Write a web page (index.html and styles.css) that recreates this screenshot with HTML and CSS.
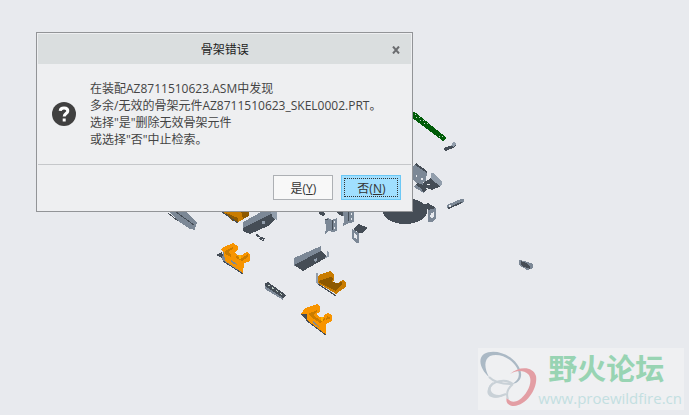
FILE: index.html
```html
<!DOCTYPE html>
<html lang="zh-CN">
<head>
    <meta charset="UTF-8">
    <title>骨架错误</title>
    <link rel="stylesheet" href="styles.css">
</head>
<body>
    <!-- 模型视图 -->
    <svg class="scene" width="689" height="415" viewBox="0 0 689 415" shape-rendering="crispEdges" aria-hidden="true">
        <!-- 绿色导轨 -->
        <path class="green" d="M411 110l5 3 31 25-4 3-32-24z"/>
        <path class="holes" d="M412 114l30 24M415 114l30 24"/>
        <path class="dark" d="M444 148l8-3 4 0-1 2-9 4-2-1z"/>
        <path class="light" d="M453 142l1-1 2 3-2 3-3-1z"/>

        <!-- 右侧支架 -->
        <path class="steel" d="M413 167l3-4 11 8-1 10-4 2 5 4-3 6-10-6 3-4-4-3z"/>
        <path class="dark" d="M416 163l11 8v2l-12-8zM417 183l4 1 6 5-3 4-3-5-5-3z"/>
        <path class="dark" d="M423 183l8-5 10 8-9 4-9-3z"/>
        <path class="light" d="M431 173l2 0 9 8v4l-2 1-9-7z"/>
        <path class="hole" d="M416 175h1v2h-1zM421 178h2v2h-2zM427 184h3v1h-3z"/>
        <path class="steel" d="M447 205l14-6h3v2l-2 2-13 6-2-1z"/>
        <path class="dark" d="M447 208l14-6 1 1-13 6z"/>
        <path class="hole" d="M449 205h2v2h-2z"/>

        <!-- 圆盘 -->
        <ellipse class="dark" cx="405" cy="211" rx="22" ry="13"/>
        <path class="dark" d="M423 205l5-2 8 5-6 3z"/>
        <path class="steel" d="M428 210l8-2v10l-3 4h-5z"/>
        <path class="hole" d="M431 213l3-1v4l-2 2-2-1z"/>

        <!-- 左侧板件 -->
        <path class="steel" d="M168 211h17l6 6 6 6-1 2-1 5-5-1-12-8z"/>
        <path class="edge" d="M176 212l18 13M168 213l10 8"/>
        <path class="amber" d="M223 211h26v5l-11 6-6-1z"/>
        <path class="amber-dark" d="M226 213l12 5v4l-6-1zM241 211h8v5l-6 3z"/>
        <path class="edge" d="M222 212l16 11"/>

        <!-- 槽形件 -->
        <path class="steel" d="M243 222l20-11h14v9l-3-1-15 7-16 5z"/>
        <path class="dark" d="M243 228l28-14 5 5-8 7-18 8-7-3z"/>
        <path class="light" d="M271 212h6v8l-4-2zM262 221h3v3h-3z"/>
        <path class="dark" d="M255 235l2-1 4 3 4 1-1 3-4-1-1-2z"/>
        <path class="hole" d="M258 237h2v1h-2zM262 239h1v1h-1z"/>
        <path class="steel" d="M294 258l27-12v7l-27 13z"/>
        <path class="dark" d="M294 265l27-14 6 5-3 3-21 12z"/>
        <path class="light" d="M327 251l2 1v5l-5 1 3-3zM314 259l3-1v3l-2 1z"/>

        <!-- 小夹片 -->
        <path class="dark" d="M318 211h6l1 3-1 2-4-1zM335 211h10l-2 5-4-1z"/>
        <path class="steel" d="M325 219l3-1 4 2 5-2v13l-4 1-5-1-3 3 1-5z"/>
        <path class="edge" d="M332 220v10M325 220l3-1"/>
        <path class="hole" d="M334 221h1v2h-1zM334 227h1v2h-1z"/>
        <path class="steel" d="M343 211h11v11l-5 1-6 3 1-6z"/>
        <path class="edge" d="M348 212v9"/>
        <path class="hole" d="M351 213h1v2h-1zM351 218h1v2h-1z"/>
        <path class="dark" d="M353 229l6-5 9 4-6 5-3 0z"/>
        <path class="steel" d="M352 229l7 4v10l-2 0-5-4z"/>
        <path class="hole" d="M354 233l3 2v4l-3-1z"/>

        <!-- 橙色托架 -->
        <path class="dark" d="M216 255l6-3 3 9-3-3z"/>
        <path class="steel" d="M223 252l2 1v8l18 12-1 1-20-14z"/>
        <path class="orange" d="M221 249l3-2 9-4 5 3v4l-3 2 2 3 5 0 2-2 3-1 3 3v6l-6 2-1 10-18-12-1-8z"/>
        <path class="amber" d="M225 251l8-4v2l-5 3 3 3v2l-6-3zM236 256l6 2 6-4v3l-6 4-6-3z"/>
        <path class="steel" d="M231 260l5 3 1 2-5-2z"/>
        <path class="edge" d="M223 261l20 13"/>
        <path class="yellow" d="M239 255h2v4h-2z"/>

        <path class="light" d="M316 273h2v10l18 12h-2l-18-12z"/>
        <path class="amber" d="M318 276l3-2 9-3 4 3v6l-2 2 6 1 5-3 3 2v5l-9 6-1 1-18-11z"/>
        <path class="amber-dark" d="M319 281l11-4 3 1-1 4 6 1 4-1v2l-6 7-18-9z"/>
        <path class="edge" d="M318 284l18 12"/>

        <path class="dark" d="M301 314l6-1v7l-4-3z"/>
        <path class="orange" d="M301 314l4-6 12-4 3 2v6l-4 2 4 3 3 1 2-4 3-1 4 2v6l-6 3v11l-19-15v-6z"/>
        <path class="amber" d="M308 314l9-4v2l-4 3 7 5 5-2v2l-5 3-9-6zM327 316l4 2-5 2z"/>
        <path class="steel" d="M313 321l5 4 1 2-6-4z"/>
        <path class="edge" d="M306 320l20 15"/>
        <path class="yellow" d="M321 317h2v4h-2z"/>

        <!-- 冲孔条与小件 -->
        <path class="steel" d="M265 286l18 11v3l-18-11z"/>
        <path class="dark" d="M265 283l3-1 18 13-3 3-18-12z"/>
        <path class="slots" d="M268 285l16 11"/>
        <path class="steel" d="M519 260l5 1 9 3v4l-6 2-8-5z"/>
        <path class="dark" d="M521 261l5 2 4 4v2l-6-2-3-2z"/>
    </svg>

    <!-- 错误对话框 -->
    <section class="dialog" role="dialog" aria-labelledby="dialogTitle">
        <header class="dialog-header">
            <h1 class="dialog-title" id="dialogTitle">骨架错误</h1>
            <button class="close-button" aria-label="关闭">
                <svg width="8" height="8" viewBox="0 0 8 8"><path d="M1 0.5L7 7.5M7 0.5L1 7.5"/></svg>
            </button>
        </header>
        <div class="dialog-body">
            <svg class="question-icon" width="24" height="24" viewBox="0 0 24 24">
                <circle cx="12" cy="12" r="12"/>
                <path d="M8.2 8.8C8.6 4.9 15.8 5 15.8 9C15.8 11.5 12.2 11.5 12.2 14.4"/>
                <rect x="10.7" y="16.5" width="3" height="3"/>
            </svg>
            <p class="message">在装配AZ8711510623.ASM中发现<br>多余/无效的骨架元件AZ8711510623_SKEL0002.PRT。<br>选择"是"删除无效骨架元件<br>或选择"否"中止检索。</p>
        </div>
        <footer class="dialog-footer">
            <button class="button">是(<u>Y</u>)</button>
            <button class="button button-default">否(<u>N</u>)</button>
        </footer>
    </section>

    <!-- 论坛水印 -->
    <aside class="watermark">
        <svg class="logo" width="60" height="62" viewBox="0 0 60 62">
            <path fill="#abb9c5" fill-rule="evenodd" d="M34 36C44 35 46 25 39 16C31 5 15 1 6 6C-1 11 3 22 11 29C7 22 5 12 12 8C20 5 31 9 37 17C43 25 42 32 34 36Z"/>
            <path fill="#e39ea4" d="M32 26C41 18 55 18 58 28C60 40 49 57 36 58C30 58 27 54 29 49C31 54 36 55 41 52C50 46 56 32 50 26C46 22 38 22 32 26Z"/>
            <path fill="none" stroke="#c9d1d7" stroke-width="2" d="M35 36C27 30 14 33 11 41C8 49 17 51 28 46M11 29C19 37 31 36 35 36M35 36C29 41 28 46 30 51"/>
            <path fill="#c9d1d7" d="M15 34C9 38 8 46 14 49C18 51 24 49 28 46C20 48 15 47 13 43C12 39 15 36 15 34Z"/>
        </svg>
        <div class="watermark-text">
            <div class="forum-name">野火论坛</div>
            <div class="forum-url">www.proewildfire.cn</div>
        </div>
    </aside>
</body>
</html>
```

FILE: styles.css
```css
* {
    margin: 0;
    padding: 0;
    box-sizing: border-box;
}

body {
    position: relative;
    min-height: 100vh;
    overflow: hidden;
    background: #e8eaee;
    color: #444;
    font-family: "Open Sans", "Noto Sans CJK SC", sans-serif;
    font-size: 12px;
}

/* 模型视图 */
.scene {
    position: absolute;
    top: 0;
    left: 0;
}

.dark { fill: #454d56; }
.steel { fill: #7c8896; }
.light { fill: #929eac; }
.hole { fill: #e8eaee; }
.orange { fill: #f79400; }
.amber { fill: #c97c00; }
.amber-dark { fill: #8d5900; }
.yellow { fill: #ffb300; }
.green { fill: #005c08; }

.edge {
    fill: none;
    stroke: #454d56;
}

.slots,
.holes {
    fill: none;
    stroke: #c5d4ca;
    stroke-dasharray: 2 3;
}

.holes {
    stroke-dasharray: 1 4;
}

/* 对话框 */
.dialog {
    position: absolute;
    top: 32px;
    left: 36px;
    padding: 1px;
    background: #eeeff1;
    border: 1px solid #929497;
}

.dialog-header {
    display: grid;
    grid-template-columns: 30px 1fr 30px;
    align-items: center;
    height: 30px;
    background: #dadedf;
}

.dialog-title {
    grid-column: 2;
    color: #222;
    font-size: 12px;
    font-weight: normal;
    text-align: center;
}

.close-button {
    height: 30px;
    background: none;
    border: none;
}

.close-button path {
    fill: none;
    stroke: #6b6d70;
    stroke-width: 2;
}

.dialog-body {
    display: flex;
    align-items: center;
    gap: 14px;
    padding: 16px 30px 16px 14px;
    border-bottom: 1px solid #c5c7ca;
}

.question-icon circle {
    fill: #404040;
}

.question-icon rect {
    fill: #fff;
}

.question-icon path {
    fill: none;
    stroke: #fff;
    stroke-width: 3;
}

.message {
    line-height: 17px;
    white-space: nowrap;
}

.dialog-footer {
    display: flex;
    justify-content: flex-end;
    gap: 8px;
    padding: 10px;
}

.button {
    width: 60px;
    height: 25px;
    background: #f8f8f8;
    border: 1px solid #adb0b4;
    color: #333;
    font: inherit;
}

.button-default {
    background: #a0dfff;
    border-color: #6cc8f5;
    outline: 1px dotted #333;
    outline-offset: -4px;
}

/* 水印 */
.watermark {
    position: absolute;
    right: 5px;
    bottom: 5px;
    display: flex;
    background: #eff0f2;
}

.watermark-text {
    padding-right: 2px;
}

.forum-name {
    padding-left: 10px;
    color: #98d4b3;
    font-family: "Noto Sans CJK SC", sans-serif;
    font-size: 29px;
    font-weight: bold;
    line-height: 38px;
}

.forum-url {
    color: #c3dfe1;
    font-size: 15px;
    line-height: 24px;
}
```
